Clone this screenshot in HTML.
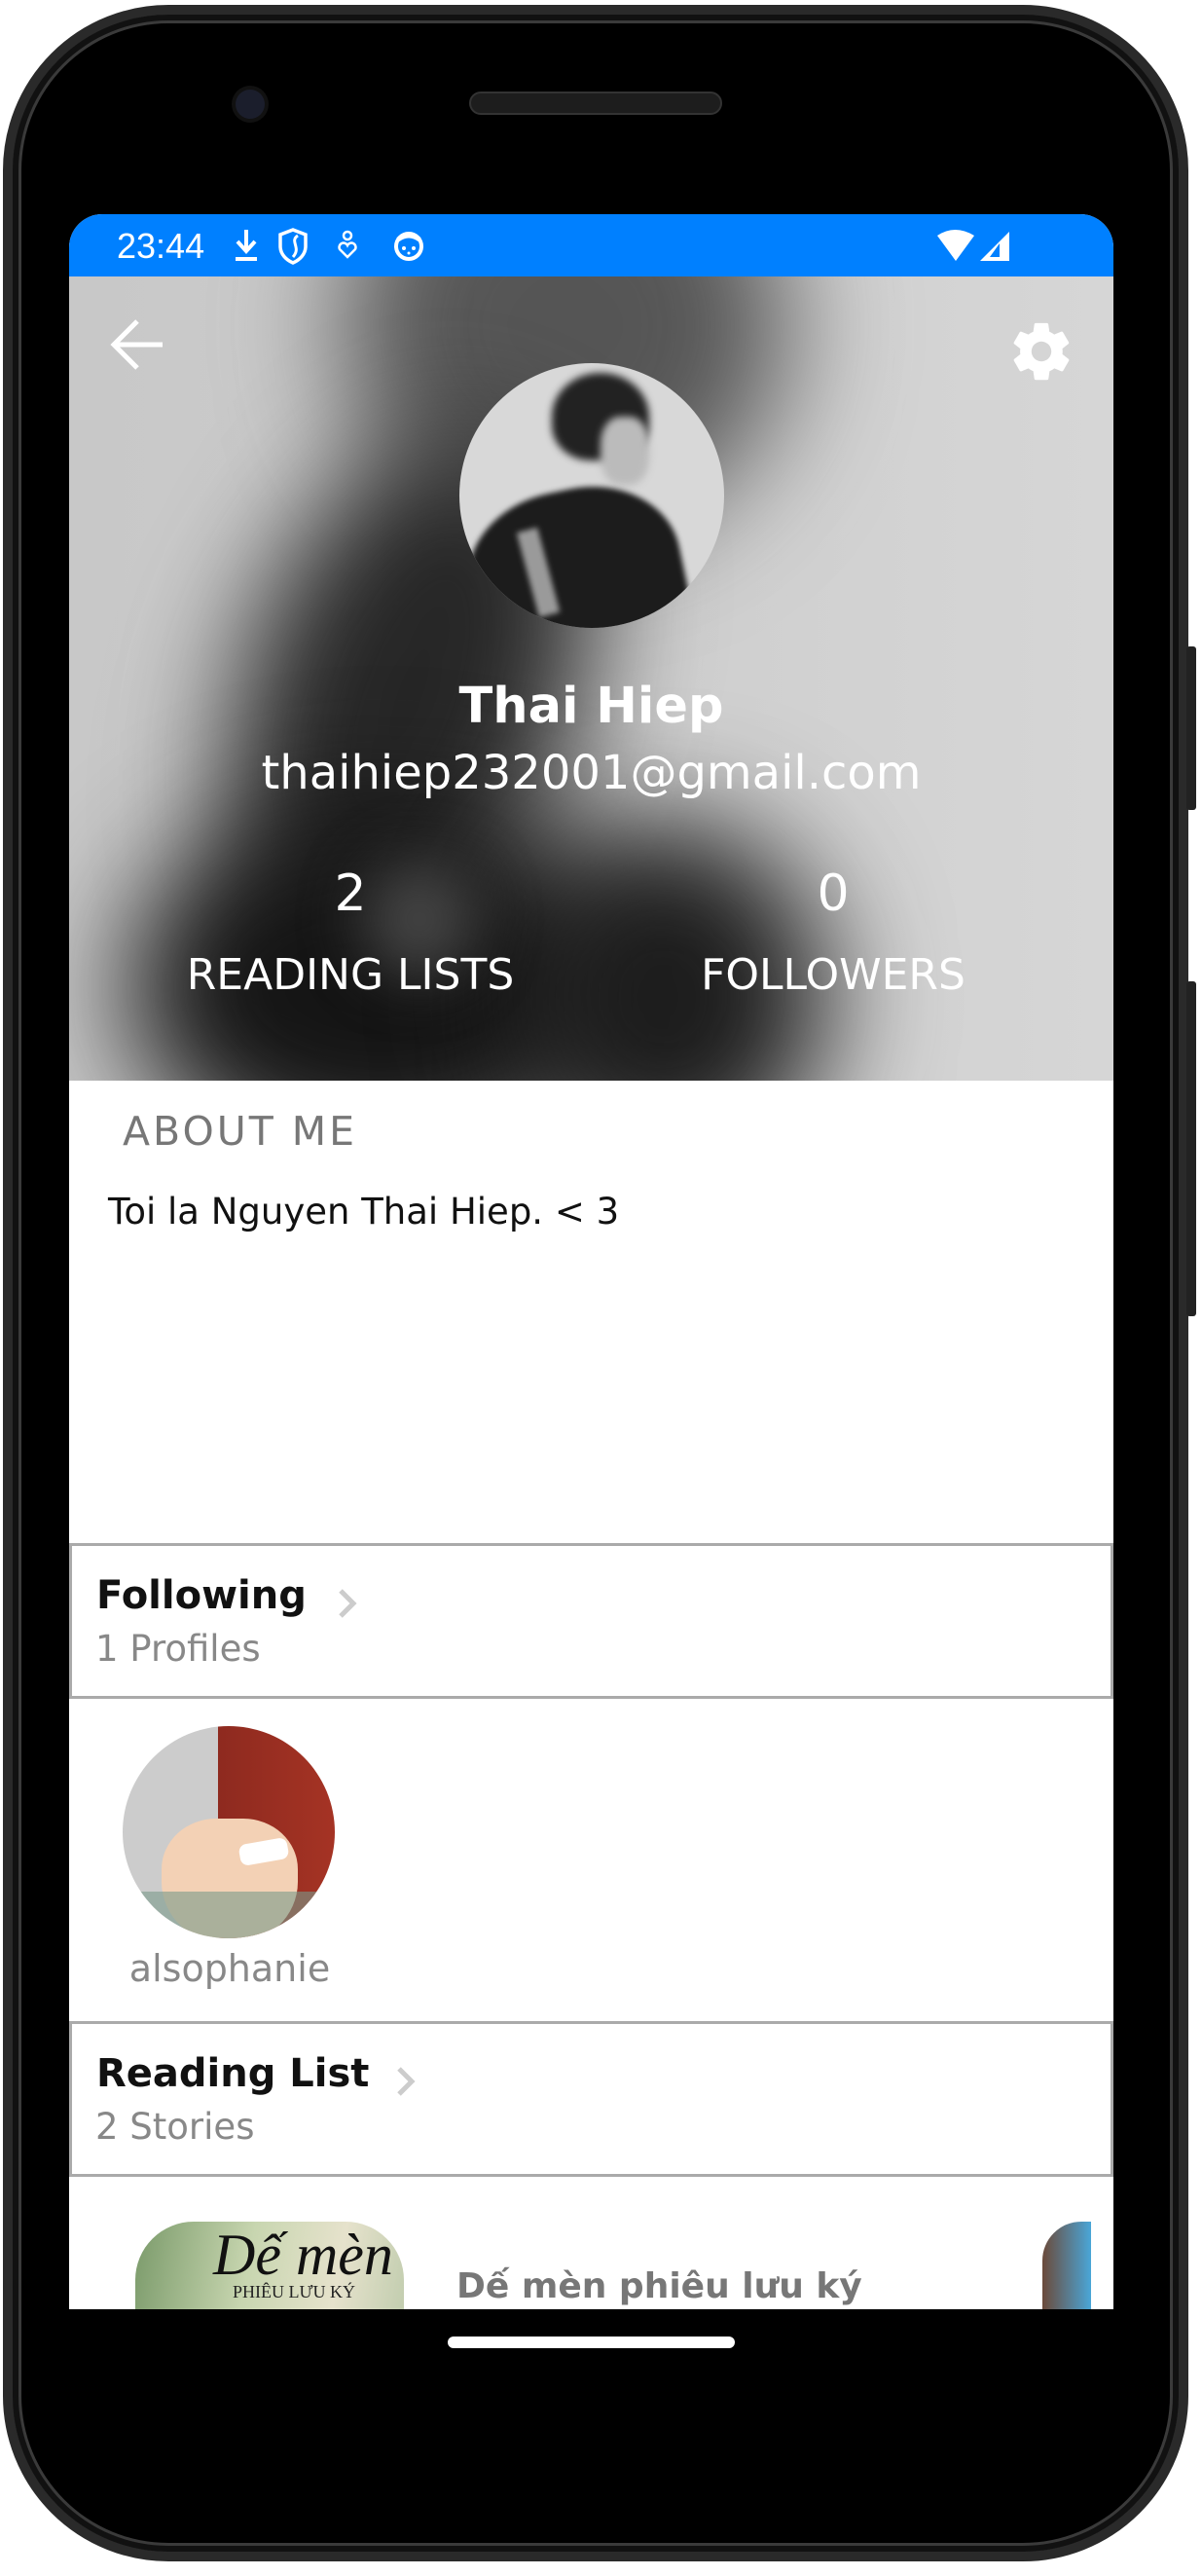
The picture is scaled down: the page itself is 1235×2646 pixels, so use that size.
<!DOCTYPE html>
<html><head><meta charset="utf-8"><style>
*{margin:0;padding:0;box-sizing:border-box}
body{width:1235px;height:2646px;background:#fff;position:relative;overflow:hidden;font-family:"DejaVu Sans","Liberation Sans",sans-serif}
.phone{position:absolute;left:3px;top:5px;width:1218px;height:2626px;border-radius:170px;background:#000;border:10px solid #2a2a2a;box-shadow:inset 0 0 0 6px #111, inset 0 0 0 9px #3a3a3a}
.btn{position:absolute;left:1219px;width:10px;background:#222;border-radius:3px}
.screen{position:absolute;left:71px;top:220px;width:1073px;height:2152px;background:#fff;overflow:hidden;border-radius:34px 34px 0 0}
.status{position:absolute;left:0;top:0;width:100%;height:64px;background:#0080ff;color:#fff;z-index:2}
.hdr{position:absolute;left:0;top:64px;width:100%;height:826px;background:linear-gradient(90deg,#c8c8c8,#cccccc 40%,#d6d6d6);overflow:hidden}
.bl{position:absolute;border-radius:50%;filter:blur(60px)}
.c{position:absolute;left:0;width:100%;text-align:center;color:#fff}
.box{position:absolute;left:0;width:1073px;border:3px solid #aaa;background:#fff}
.t{position:absolute;font-weight:bold;color:#111;font-size:40px}
.s{position:absolute;color:#888;font-size:37px}
</style></head><body>
<div class="phone"></div>
<div class="btn" style="top:664px;height:168px"></div>
<div class="btn" style="top:1008px;height:344px"></div>
<div style="position:absolute;left:242px;top:92px;width:30px;height:30px;border-radius:50%;background:#1b1e2c;box-shadow:0 0 0 4px #111"></div>
<div style="position:absolute;left:482px;top:94px;width:260px;height:24px;border-radius:12px;background:#1d1d1d;border:2px solid #333"></div>
<div class="screen">
 <div class="status">
  <div style="position:absolute;left:49px;top:12px;font-family:'Liberation Sans',sans-serif;font-size:36px">23:44</div>
  <svg style="position:absolute;left:165px;top:12px" width="200" height="42" viewBox="0 0 200 42">
   <path d="M17 4v20M8 16l9 10 9-10M6 34h22" stroke="#fff" stroke-width="4" fill="none"/>
   <path d="M65 4l13 5v12c0 8-6 14-13 17-7-3-13-9-13-17V9z" stroke="#fff" stroke-width="3.5" fill="none"/>
   <path d="M70 10c-9 6 4 12-5 22" stroke="#fff" stroke-width="3" fill="none"/>
   <circle cx="121" cy="10" r="4" stroke="#fff" stroke-width="2.5" fill="none"/>
   <path d="M121 32l-8-8a4 4 0 0 1 8-4 4 4 0 0 1 8 4z" stroke="#fff" stroke-width="2.5" fill="none"/>
   <circle cx="184" cy="21" r="13" stroke="#fff" stroke-width="4" fill="none"/>
   <path d="M173 14q11-8 22 0" stroke="#fff" stroke-width="5" fill="none"/>
   <circle cx="179" cy="23" r="2" fill="#fff"/><circle cx="189" cy="23" r="2" fill="#fff"/><circle cx="184" cy="28" r="1.5" fill="#fff"/>
  </svg>
  <svg style="position:absolute;left:890px;top:14px" width="80" height="40" viewBox="0 0 80 40">
   <path d="M2 8Q20-4 40 8L21 34z" fill="#fff"/>
   <path d="M76 4V34H46z" fill="#fff"/><path d="M66 16V30H56z" fill="#0080ff"/>
  </svg>
 </div>
 <div class="hdr">
  <div class="bl" style="left:280px;top:-170px;width:460px;height:440px;background:#555"></div>
  <div class="bl" style="left:180px;top:150px;width:340px;height:560px;background:#262626;transform:rotate(20deg)"></div>
  <div class="bl" style="left:60px;top:540px;width:520px;height:380px;background:#141414"></div>
  <div class="bl" style="left:440px;top:560px;width:340px;height:360px;background:#1c1c1c"></div>
  <div class="bl" style="left:300px;top:600px;width:120px;height:120px;background:#444;filter:blur(30px)"></div>
  <svg style="position:absolute;left:40px;top:40px" width="60" height="60" viewBox="0 0 60 60"><path d="M56 30H8M30 6L6 30l24 24" stroke="#fff" stroke-width="5" fill="none"/></svg>
  <svg style="position:absolute;left:964px;top:42px" width="70" height="70" viewBox="0 0 24 24"><path fill="#fff" d="M19.4 13c.04-.3.06-.66.06-1s-.02-.7-.07-1l2.1-1.65c.2-.15.25-.42.12-.64l-2-3.46c-.12-.22-.39-.3-.61-.22l-2.49 1c-.52-.4-1.08-.73-1.69-.98l-.38-2.65A.49.49 0 0 0 14 2h-4c-.25 0-.46.18-.49.42l-.38 2.65c-.61.25-1.170.59-1.69.98l-2.49-1c-.23-.09-.49 0-.61.22l-2 3.46c-.13.22-.07.49.12.64L4.57 11c-.04.32-.07.65-.07 1s.02.68.07 1l-2.11 1.65c-.19.15-.24.42-.12.64l2 3.46c.12.22.39.3.61.22l2.49-1c.52.4 1.08.73 1.69.98l.38 2.65c.03.24.24.42.49.42h4c.25 0 .46-.18.49-.42l.38-2.65c.61-.25 1.17-.59 1.69-.98l2.49 1c.23.09.49 0 .61-.22l2-3.46c.12-.22.07-.49-.12-.64zM12 15.5A3.5 3.5 0 1 1 12 8.5a3.5 3.5 0 0 1 0 7z"/></svg>
  <div style="position:absolute;left:401px;top:89px;width:272px;height:272px;border-radius:50%;overflow:hidden;background:#d8d8d8">
   <div style="position:absolute;left:95px;top:10px;width:100px;height:90px;border-radius:50% 50% 40% 40%;background:#222;filter:blur(4px)"></div>
   <div style="position:absolute;left:145px;top:55px;width:50px;height:70px;border-radius:40%;background:#bbb;filter:blur(4px)"></div>
   <div style="position:absolute;left:10px;top:130px;width:220px;height:180px;border-radius:45% 45% 0 0;background:#1c1c1c;transform:rotate(-12deg);filter:blur(3px)"></div>
   <div style="position:absolute;left:70px;top:170px;width:22px;height:90px;background:#9a9a9a;transform:rotate(-15deg);filter:blur(3px)"></div>
  </div>
  <div class="c" style="top:412px;font-size:51px;font-weight:bold">Thai Hiep</div>
  <div class="c" style="top:482px;font-size:48px">thaihiep232001@gmail.com</div>
  <div style="position:absolute;left:119px;width:340px;top:604px;text-align:center;color:#fff;font-size:52px">2</div>
  <div style="position:absolute;left:79px;width:420px;top:692px;text-align:center;color:#fff;font-size:44px;white-space:nowrap">READING LISTS</div>
  <div style="position:absolute;left:640px;width:290px;top:604px;text-align:center;color:#fff;font-size:52px">0</div>
  <div style="position:absolute;left:600px;width:370px;top:692px;text-align:center;color:#fff;font-size:44px">FOLLOWERS</div>
 </div>
 <div style="position:absolute;left:55px;top:918px;font-size:41px;color:#777;letter-spacing:3px">ABOUT ME</div>
 <div style="position:absolute;left:40px;top:1003px;font-size:37px;color:#111">Toi la Nguyen Thai Hiep. &lt; 3</div>
 <div class="box" style="top:1365px;height:160px">
  <div class="t" style="left:25px;top:28px">Following</div>
  <svg style="position:absolute;left:270px;top:42px" width="26" height="34" viewBox="0 0 26 34"><path d="M6 4l13 13L6 30" stroke="#ccc" stroke-width="5" fill="none"/></svg>
  <div class="s" style="left:24px;top:84px">1 Profiles</div>
 </div>
 <div style="position:absolute;left:55px;top:1553px;width:218px;height:218px;border-radius:50%;overflow:hidden;background:linear-gradient(90deg,#ccc 0,#ccc 45%,#8e2a1f 45%,#a53324 100%)">
  <div style="position:absolute;left:40px;top:95px;width:140px;height:130px;border-radius:40% 40% 50% 50%;background:#f3d1b5"></div>
  <div style="position:absolute;left:120px;top:118px;width:50px;height:22px;background:#fff;border-radius:8px;transform:rotate(-10deg)"></div>
  <div style="position:absolute;left:0;top:170px;width:218px;height:60px;background:#7a9a8a;opacity:.6"></div>
 </div>
 <div style="position:absolute;left:0;width:330px;top:1780px;text-align:center;font-size:38px;color:#888">alsophanie</div>
 <div class="box" style="top:1856px;height:160px">
  <div class="t" style="left:25px;top:28px">Reading List</div>
  <svg style="position:absolute;left:330px;top:42px" width="26" height="34" viewBox="0 0 26 34"><path d="M6 4l13 13L6 30" stroke="#ccc" stroke-width="5" fill="none"/></svg>
  <div class="s" style="left:24px;top:84px">2 Stories</div>
 </div>
 <div style="position:absolute;left:68px;top:2062px;width:276px;height:200px;border-radius:60px 60px 0 0;background:linear-gradient(100deg,#7a9a6a,#c8d6b0 40%,#e6e2cc 70%,#b9c8a8);overflow:hidden">
  <div style="position:absolute;left:80px;top:0;font-family:'Liberation Serif',serif;font-size:60px;color:#111;font-style:italic">Dế mèn</div>
  <div style="position:absolute;left:100px;top:62px;font-family:'Liberation Serif',serif;font-size:18px;color:#222">PHIÊU LƯU KÝ</div>
 </div>
 <div style="position:absolute;left:398px;top:2108px;font-size:36px;font-weight:bold;color:#777">Dế mèn phiêu lưu ký</div>
 <div style="position:absolute;left:1000px;top:2062px;width:50px;height:200px;border-radius:40px 0 0 0;background:linear-gradient(90deg,#6b4a3a,#4aa6d8)"></div>
</div>
<div style="position:absolute;left:460px;top:2400px;width:295px;height:12px;border-radius:6px;background:#fff"></div>
</body></html>
